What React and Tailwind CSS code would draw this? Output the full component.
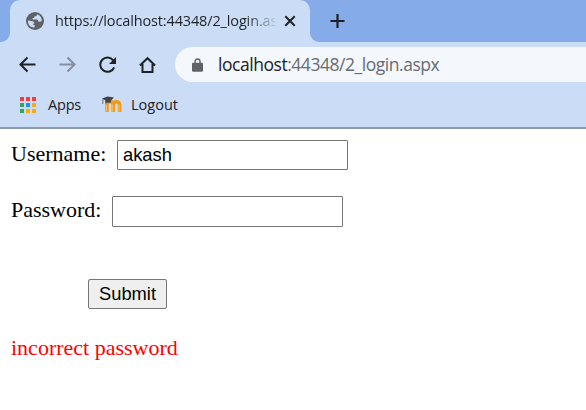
import React from "react";

function GlobeIcon() {
  return (
    <svg className="h-[18px] w-[18px] shrink-0" viewBox="0 0 18 18">
      <circle cx="9" cy="9" r="9" fill="#5f6368" />
      <path d="M11 2.300C11 4 9.900 4.300 8.600 4.300 8.600 5.600 7.800 6.100 6.600 6.100 6.200 7.200 6.700 7.600 7.800 7.600h2.700c1.300 0 1.600.8 1.800 1.800 1.200.5 2.400.1 3.400-.5C15.900 5.800 14 3.100 11 2.300Z" fill="#cbdcf6" />
      <path d="M2.100 8.400C3.500 8.300 4.300 8.800 5.300 8.900 7.300 9 8.300 10.100 8.600 11.500H7.300c-.4 1 .1 1.500 1.200 1.500.6.700.4 1.500-.3 2.400C4.500 15.500 1.600 12.300 2.100 8.400Z" fill="#cbdcf6" />
    </svg>
  );
}

function CloseIcon() {
  return (
    <svg className="h-[12px] w-[12px] shrink-0" viewBox="0 0 12 12" fill="none" stroke="#202124" strokeWidth="2">
      <path d="M1.300 1.300l9.400 9.400M10.700 1.300l-9.400 9.400" />
    </svg>
  );
}

function PlusIcon() {
  return (
    <svg className="h-[16px] w-[16px] shrink-0" viewBox="0 0 16 16" fill="none" stroke="#202124" strokeWidth="2.200">
      <path d="M8.500 1v14M1.500 8h14" />
    </svg>
  );
}

function BackIcon() {
  return (
    <svg className="h-[18px] w-[18px] shrink-0" viewBox="0 0 18 18" fill="none" stroke="#202124" strokeWidth="2">
      <path d="M16.500 8.500H2.500M8.500 1.500L1.500 8.500l7 7" />
    </svg>
  );
}

function ForwardIcon() {
  return (
    <svg className="h-[18px] w-[18px] shrink-0" viewBox="0 0 18 18" fill="none" stroke="#858d9e" strokeWidth="2">
      <path d="M.500 8.500h14M8.500 1.500l7 7-7 7" />
    </svg>
  );
}

function ReloadIcon() {
  return (
    <svg className="h-[18px] w-[18px] shrink-0" viewBox="0 0 18 18">
      <path d="M14.300 4.300A7.200 7.200 0 1 0 15.200 11.300" fill="none" stroke="#202124" strokeWidth="2" />
      <path d="M17 1v7h-7Z" fill="#202124" />
    </svg>
  );
}

function HomeIcon() {
  return (
    <svg className="h-[18px] w-[18px] shrink-0" viewBox="0 0 18 18" fill="none" stroke="#202124" strokeWidth="2">
      <path d="M.900 9.500L8.500 2.200l7.600 7.300M3.500 8v8h10V8" />
    </svg>
  );
}

function LockIcon() {
  return (
    <svg className="h-[14px] w-[11px] shrink-0" viewBox="0 0 11 14">
      <path d="M3 6V3.500a2.500 2.500 0 0 1 5 0V6" fill="none" stroke="#5f6368" strokeWidth="1.400" />
      <rect y="4.800" width="11" height="9" rx="1.200" fill="#5f6368" />
    </svg>
  );
}

function AppsIcon() {
  return (
    <div className="grid h-[16px] w-[16px] shrink-0 grid-cols-3 gap-[2px]">
      <i className="bg-[#f23d3b]" /><i className="bg-[#f23d3b]" /><i className="bg-[#f23d3b]" />
      <i className="bg-[#32a65b]" /><i className="bg-[#258cf4]" /><i className="bg-[#f8aa10]" />
      <i className="bg-[#32a65b]" /><i className="bg-[#f8aa10]" /><i className="bg-[#f8aa10]" />
    </div>
  );
}

function MoodleIcon() {
  return (
    <svg className="h-[17px] w-[20px] shrink-0" viewBox="0 0 20 17">
      <path d="M5 16V6M5 9q0-3.200 3-3.200t3.200 2.700V16M11.200 9q.2-3.200 3.200-3.200t3.200 3V16" fill="none" stroke="#f09a18" strokeWidth="3.600" />
      <path d="M4.500 15.500V9M10.700 15.500V8.500M17.100 15.500V8.500" fill="none" stroke="#ffc45b" strokeWidth=".9" />
      <path d="M0 2.600L5.500.5l6.500 1-3.200 3.200v2.200q-3-1-5.300.5l-.3-3.200Z" fill="#454343" />
      <path d="M1 3L.7 8" stroke="#6e6256" strokeWidth=".9" />
    </svg>
  );
}

function TabStrip() {
  return (
    <header className="flex h-[42px] bg-[#85ace9]">
      <div className="w-[10px] bg-[#cbdcf6]">
        <div className="h-full rounded-br-[9px] bg-[#85ace9]" />
      </div>
      <div className="flex w-[300px] items-center rounded-t-[10px] bg-[#cbdcf6] pl-[16px]">
        <GlobeIcon />
        <div className="ml-[11px] w-[220px] overflow-hidden whitespace-nowrap bg-[linear-gradient(90deg,#202124_190px,transparent_224px)] bg-clip-text text-[14.500px] leading-[20px] tracking-[-0.140px] text-transparent">
          https://localhost:44348/2_login.aspx
        </div>
        <div className="ml-[9px] flex"><CloseIcon /></div>
      </div>
      <div className="flex-1 bg-[#cbdcf6]">
        <div className="flex h-full items-center rounded-bl-[9px] bg-[#85ace9] pl-[19px]">
          <PlusIcon />
        </div>
      </div>
    </header>
  );
}

function Toolbar() {
  return (
    <div className="h-[87px] border-b-2 border-[#8a9ab2] bg-[#cbdcf6] pt-[5px]">
      <div className="flex h-[35px] items-center pl-[19px]">
        <div className="flex gap-[22px]">
          <BackIcon />
          <ForwardIcon />
          <ReloadIcon />
          <HomeIcon />
        </div>
        <div className="ml-[18px] flex h-[35px] flex-1 items-center rounded-l-full bg-[#f4f7fc] pl-[17px]">
          <LockIcon />
          <span className="ml-[15px] whitespace-nowrap pb-[2px] text-[17.500px] leading-[24px] tracking-[-0.460px] text-[#686b70]">
            <span className="text-[#202124]">localhost</span>:44348/2_login.aspx
          </span>
        </div>
      </div>
      <div className="flex h-[45px] items-center pl-[20px] text-[14.500px] text-[#202124]">
        <AppsIcon />
        <span className="ml-[12px] w-[54px] tracking-[-0.200px]">Apps</span>
        <MoodleIcon />
        <span className="ml-[9px]">Logout</span>
      </div>
    </div>
  );
}

export default function App() {
  return (
    <div className="h-[410px] w-[586px] overflow-hidden bg-white font-['Open_Sans','Noto_Sans',sans-serif]">
      <TabStrip />
      <Toolbar />
      <main className="pl-[11px] pt-[11px] font-['Liberation_Serif',serif] text-[22px] leading-[26px] text-black">
        <div className="flex h-[30px]">
          <label htmlFor="username" className="w-[106px] pt-px">Username:</label>
          <input id="username" defaultValue="akash" className="h-[30px] w-[231px] rounded-[1px] border border-[#767676] bg-white px-[5px] font-['Liberation_Sans',sans-serif] text-[18.330px] outline-none" />
        </div>
        <div className="mt-[26px] flex h-[31px]">
          <label htmlFor="password" className="w-[101px] pt-px">Password:</label>
          <input id="password" type="password" className="h-[31px] w-[231px] rounded-[1px] border border-[#767676] bg-white px-[5px] outline-none" />
        </div>
        <button className="ml-[77px] mt-[52px] block h-[30px] w-[79px] rounded-[2px] border border-[#767676] bg-[#efefef] font-['Liberation_Sans',sans-serif] text-[18.330px] leading-[26px]">
          Submit
        </button>
        <p className="mt-[26px] text-[#f00]">incorrect password</p>
      </main>
    </div>
  );
}
